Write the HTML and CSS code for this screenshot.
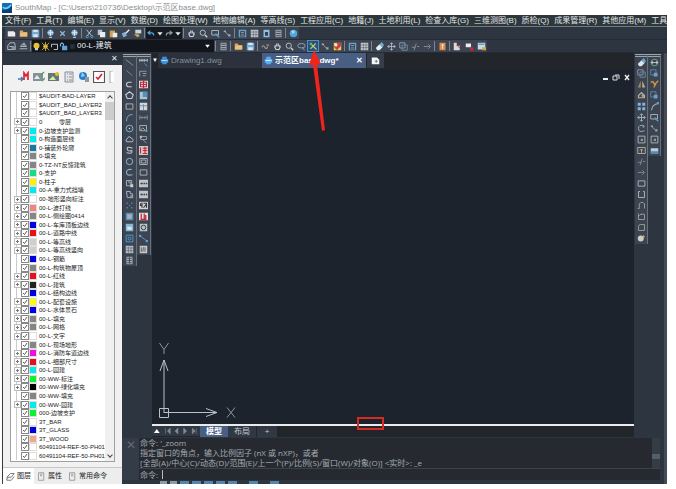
FILE: index.html
```html
<!DOCTYPE html>
<html lang="zh-CN">
<head>
<meta charset="utf-8">
<title>SouthMap</title>
<link rel="stylesheet" href="styles.css">
</head>
<body>
<div class="app">
  <header class="titlebar">
    <svg class="logo" viewBox="0 0 12 12"><rect width="12" height="12" rx="1" fill="#1769b5"/><path d="M0 8C4 9 8 7 12 3V12H0Z" fill="#0b3f7c"/><path d="M1 5C4 8 8 6 11 2" stroke="#63d2f2" stroke-width="2" fill="none"/></svg>
    <span>SouthMap - [C:\Users\210736\Desktop\示范区base.dwg]</span>
  </header>
  <nav class="menubar">
    <button>文件(F)</button><button>工具(T)</button><button>编辑(E)</button><button>显示(V)</button><button>数据(D)</button><button>绘图处理(W)</button><button>地物编辑(A)</button><button>等高线(S)</button><button>工程应用(C)</button><button>地籍(J)</button><button>土地利用(L)</button><button>检查入库(G)</button><button>三维测图(B)</button><button>质检(Q)</button><button>成果管理(R)</button><button>其他应用(M)</button><button>工具箱</button>
  </nav>
  <div class="toolbars">
    <div class="toolbar">
      <div class="group" data-icons="new folder save | globe cross globe | cut copy paste brush match |"></div>
      <div class="group history" data-icons="undo caret redo caret"></div>
      <div class="group" data-icons="| hand zoom zoomwin scatter | panel table props list | help"></div>
    </div>
    <div class="toolbar">
      <div class="group" data-icons="layers stack |"></div>
      <div class="layer-combo">
        <div class="group small" data-icons="bulb sun frame lock swatch"></div>
        <select aria-label="当前图层"><option>00-L-建筑</option></select>
        <svg class="combo-caret" viewBox="0 0 12 12"><path d="M2 4H10L6 9Z" fill="#fff"/></svg>
      </div>
      <div class="group" data-icons="| list | folder save | link hand zoom zoomprev pick! scatter colors | panel table | eraser move copyobj trim extend | book | export record sheet"></div>
    </div>
  </div>

  <div class="workspace">
    <aside class="panel">
      <div class="panel-head"><button aria-label="关闭面板">✕</button></div>
      <div class="panel-body">
        <div class="panel-tools" data-icons="addmark picture image tree globeplus checkred handle"></div>
        <div class="tree-box">
          <ul class="tree" id="tree"></ul>
          <div class="scroll"><span class="up"></span><span class="thumb"></span><span class="down"></span></div>
        </div>
      </div>
      <div class="panel-tabs">
        <button class="current"><svg viewBox="0 0 12 12"><path d="M1 7L6 2H11L7 7ZM1 9L3 8M1 9L1 11H7L11 6" fill="none" stroke="#555"/></svg>图层</button>
        <button><svg viewBox="0 0 12 12"><path d="M2 1H9V11H2ZM4 3H7M4 5H7" fill="none" stroke="#888"/></svg>属性</button>
        <button><svg viewBox="0 0 12 12"><path d="M2 1H9V11H2ZM4 3H7M4 5H7" fill="none" stroke="#888"/></svg>常用命令</button>
      </div>
    </aside>

    <div class="main">
      <div class="stage">
        <div class="rail">
          <div class="column" data-icons="line ray polyc polygon rect arc circle cloud spline ellipse ellarc insert block points hatch gradient region table text"></div>
          <div class="column" data-icons="dim leader redbox bluebox grid tee imgpin node redtext frameimg rect dashes dashes ninety redbars camera line2 table2"></div>
        </div>
        <div class="document">
          <div class="doc-tabs">
            <span class="doc-menu">▼</span>
            <button class="doc-tab"><svg viewBox="0 0 12 12"><path d="M3 1H9V4H3ZM1 4H11V9H1ZM3 8H9V11H3Z" fill="#3c92dc"/><path d="M2 6H10" stroke="#e0f0ff"/></svg>Drawing1.dwg</button>
            <button class="doc-tab active"><svg viewBox="0 0 12 12"><path d="M3 1H9V4H3ZM1 4H11V9H1ZM3 8H9V11H3Z" fill="#58aef5"/><path d="M2 6H10" stroke="#fff"/></svg>示范区base.dwg*<span class="close">✕</span></button>
            <button class="doc-new" aria-label="新建"><svg viewBox="0 0 12 12"><path d="M1 2H8L11 5V11H1Z" fill="#f3f5f7"/><path d="M7 5V9M5 7H9" stroke="#59616b"/></svg></button>
          </div>
          <div class="canvas">
            <div class="win-controls">
              <svg viewBox="0 0 30 10"><path d="M1 7H6" stroke="#eee" stroke-width="2"/><path d="M13 3H17V7M11 4H15V8H11Z" fill="none" stroke="#ddd"/><path d="M23 3L27 8M27 3L23 8" stroke="#eee" stroke-width="1.4"/></svg>
            </div>
            <svg class="ucs" viewBox="0 0 84 84">
              <g fill="none" stroke="#b9c0c6"><path d="M7.500 3L12 9.500L16.500 3M12 9.500V14" stroke="#8d949b"/><path d="M12 73V20M8 31L12 20L16 31M7.500 68.500H16.500V77.500H7.500ZM12 72.500H65M54 68.500L65 72.500L54 76.500"/><path d="M75 67.500L83 77.500M83 67.500L75 77.500" stroke="#8d949b"/></g>
            </svg>
          </div>
          <div class="layout-tabs">
            <svg viewBox="0 0 50 10"><path d="M2 7L5 3L8 7Z" fill="#fff"/><path d="M14 2V8M33 2L36 5L33 8ZM27 2V8L24 5ZM19 2V8L16 5ZM42 2L45 5L42 8ZM46 2V8" fill="#828b96" stroke="#828b96" stroke-width=".6"/></svg>
            <button class="current">模型</button><button>布局</button><button class="plus">+</button>
          </div>
        </div>
        <div class="rail right">
          <div class="column" data-icons="eraser copyobj mirror offset array move rotate scale stretch trim extend rect rectgap join chamfer fillet explode"></div>
          <div class="column" data-icons="measure copyblue pencil copyblue curve zoomwin scatter scale sheet2"></div>
        </div>
      </div>
      <div class="command">
        <div class="command-side">✕</div>
        <div class="command-main">
          <div class="log">
            <div class="log-text"><p>命令: '_zoom</p><p>指定窗口的角点，输入比例因子 (nX 或 nXP)，或者</p><p>[全部(A)/中心(C)/动态(D)/范围(E)/上一个(P)/比例(S)/窗口(W)/对象(O)] &lt;实时&gt;: _e</p></div>
            <div class="log-scroll"><span></span></div>
          </div>
          <div class="prompt"><label for="cmd">命令:</label><input id="cmd" type="text"><i></i></div>
        </div>
      </div>
      <div class="status"><i></i><i></i><b></b><b></b><b></b><b></b><b></b><s></s><b></b><s></s><b></b></div>
    </div>
    <div class="window-edge"></div>
  </div>
  <svg class="arrow" viewBox="0 0 20 84"><path d="M6 1L1 16L5 16L14 82L17 81L9 16L13 15Z" fill="#f1241b"/></svg>
  <div class="mark"></div>
</div>
<script src="app.js"></script>
</body>
</html>
```
FILE: styles.css
```css
* { box-sizing: border-box; }
body {
  margin: 0;
  background: #fff;
  font-family: "Liberation Sans", "Noto Sans CJK SC", sans-serif;
  font-size: 8px;
  line-height: 10px;
}
button, select, input {
  font: inherit;
  color: inherit;
  background: none;
  border: 0;
  padding: 0;
  margin: 0;
  border-radius: 0;
  appearance: none;
}
svg { display: block; }

.app {
  position: relative;
  height: 100vh;
  padding: 0 9px 5px 2px;
  display: flex;
  flex-direction: column;
  overflow: hidden;
}
.titlebar {
  flex: 0 0 15px;
  display: flex;
  align-items: center;
  gap: 3px;
  color: #8e8e8e;
}
.logo { width: 10px; height: 10px; }
.menubar {
  flex: 0 0 12px;
  display: flex;
  align-items: center;
  gap: 5px;
  padding-left: 3px;
  overflow: hidden;
  white-space: nowrap;
  background: #2c363b;
  border-bottom: 1px solid #707b80;
  color: #e2e6e8;
}
.menubar button { flex: none; }

.toolbars { flex: 0 0 26px; background: #2d3541; }
.toolbar {
  display: flex;
  align-items: center;
  height: 13px;
  padding-left: 3px;
  border-bottom: 1px solid #262c35;
}
.group { display: flex; align-items: center; height: 12px; background: #3b4450; }
.group button, .column button { display: grid; place-items: center; width: 12px; height: 12px; }
.group svg { width: 9px; height: 9px; opacity: .9; }
.group .sep { width: 1px; height: 10px; margin: 0 1px; background: #7d868f; }
.group.history { background: #151a21; }
.group.history button { width: 9px; }
.group.history svg { width: 8px; height: 9px; }
.group .on { background: #28527b; outline: 1px solid #4f8ec6; outline-offset: -1px; }
.layer-combo {
  display: flex;
  align-items: center;
  width: 182px;
  height: 12px;
  background: #12161c;
  color: #edf0f2;
}
.group.small { background: none; }
.group.small button { width: 9px; }
.layer-combo select { flex: 1; min-width: 0; height: 10px; line-height: 10px; }
.combo-caret { width: 7px; height: 8px; margin: 0 3px; }

.workspace { flex: 1; min-height: 0; display: flex; background: #2d3541; }
.panel {
  flex: 0 0 120px;
  min-width: 0;
  display: flex;
  flex-direction: column;
  border-left: 1px solid #343b44;
  background: #f1f1f1;
}
.panel-head {
  flex: 0 0 12px;
  display: flex;
  justify-content: flex-end;
  padding-right: 4px;
  background: #2d3541;
  color: #e2e5e8;
}
.panel-body { flex: 1; min-height: 0; display: flex; flex-direction: column; padding: 4px 7px 5px; }
.panel-tools { flex: 0 0 18px; display: flex; gap: 1px; padding: 1px 0 0 8px; }
.panel-tools button { flex: none; width: 14px; height: 14px; }
.panel-tools button:last-child { width: 8px; overflow: hidden; }
.panel-tools svg { width: 12px; height: 12px; }
.tree-box { flex: 1; min-height: 0; display: flex; margin-top: 4px; background: #fff; border: 1px solid #a0a0a0; }
.tree {
  flex: 1;
  min-width: 0;
  min-height: 0;
  display: flex;
  flex-direction: column;
  margin: 0;
  padding: 0 0 1px 2px;
  overflow: hidden;
  list-style: none;
  color: #222;
  font-size: 6px;
  line-height: 8px;
}
.tree li { flex: 1 1 0; min-height: 0; white-space: pre; }
.tree label { display: flex; align-items: center; height: 100%; }
.twig { flex: 0 0 8px; height: 100%; display: grid; place-items: center; background: linear-gradient(#ccc, #ccc) 3px 0 / 1px 100% no-repeat; }
.twig.open::before {
  content: "";
  width: 5px;
  height: 5px;
  border: 1px solid #bbb;
  background: linear-gradient(#777, #777) center / 3px 1px no-repeat, linear-gradient(#777, #777) center / 1px 3px no-repeat, #fff;
}
.tree input { flex: 0 0 8px; height: 8px; border: 1px solid #888; }
.tree input:checked { background: url("data:image/svg+xml,%3Csvg xmlns='http://www.w3.org/2000/svg' viewBox='0 0 6 6'%3E%3Cpath d='M1 3L2.500 4.500L5 1' fill='none' stroke='%23333' stroke-width='.8'/%3E%3C/svg%3E") center / 6px 6px no-repeat, #fff; }
.chip { flex: 0 0 6px; height: 6px; margin: 0 3px 0 1px; box-shadow: 0 0 0 1px #ddd; }
.scroll { flex: 0 0 9px; display: flex; flex-direction: column; align-items: center; background: #f0f0f0; }
.scroll .up, .scroll .down { width: 4px; height: 4px; margin: 4px 0 2px; border: solid #444; border-width: 1px 0 0 1px; rotate: 45deg; }
.scroll .down { margin: auto 0 4px; rotate: 225deg; }
.scroll .thumb { width: 9px; height: 18px; background: #cdcdcd; }
.panel-tabs { flex: 0 0 17px; display: flex; align-items: center; background: #ededed; border-top: 1px solid #c8c8c8; color: #222; font-size: 7px; }
.panel-tabs button { display: flex; align-items: center; gap: 2px; height: 16px; padding: 0 3px; white-space: nowrap; }
.panel-tabs svg { width: 9px; height: 9px; }
.panel-tabs .current { background: #fff; }

.main { flex: 1; min-width: 0; display: flex; flex-direction: column; }
.stage { flex: 1; min-height: 0; display: flex; }
.rail { flex: 0 0 30px; display: flex; align-items: flex-start; padding: 1px 1px 0; }
.column { width: 14px; border-top: 3px double #9aa3ac; border-right: 1px solid #69727c; background: #3b4450; }
.rail.right .column { width: 13px; }
.column button { width: 100%; height: 11px; }
.column svg { width: 9px; height: 9px; opacity: .85; }
.document { flex: 1; min-width: 0; display: flex; flex-direction: column; background: #1c232d; }
.doc-tabs { flex: 0 0 16px; display: flex; background: #22262b; }
.doc-menu { width: 6px; color: #fff; font-size: 6px; line-height: 14px; }
.doc-tab, .doc-new { display: flex; align-items: center; height: 15px; gap: 2px; }
.doc-tab { width: 104px; padding-left: 2px; background: #2b323d; color: #87909b; }
.doc-tab svg { width: 9px; height: 9px; }
.doc-tab.active { background: #485f83; color: #fff; font-weight: bold; }
.close { margin: 0 3px 0 auto; }
.doc-new { padding: 0 4px; margin-left: 1px; background: #353d48; }
.doc-new svg { width: 9px; height: 9px; }
.canvas { flex: 1; min-height: 0; display: flex; flex-direction: column; justify-content: space-between; border-bottom: 2px solid #e9ebed; }
.win-controls { align-self: flex-end; padding: 3px 2px; }
.win-controls svg { width: 30px; height: 10px; }
.ucs { width: 84px; height: 84px; }
.layout-tabs { flex: 0 0 11px; display: flex; background: #22262b; color: #c3c9cf; }
.layout-tabs svg { width: 48px; height: 10px; background: #303843; }
.layout-tabs button { width: 28px; background: #303843; }
.layout-tabs .current { background: #485f83; color: #fff; font-weight: bold; }
.layout-tabs .plus { width: 20px; margin-left: 1px; }

.command { flex: 0 0 43px; display: flex; border-top: 1px solid #2d3541; color: #a4abb3; }
.command-side { flex: 0 0 17px; padding-top: 2px; background: #343c48; color: #626b76; font-size: 12px; text-align: center; }
.command-main { flex: 1; min-width: 0; margin-right: 4px; display: flex; flex-direction: column; background: #262a30; font-family: "Open Sans", "Noto Sans CJK SC", sans-serif; }
.log { display: flex; justify-content: space-between; height: 31px; border-bottom: 1px solid #3c4249; }
.log-text p { height: 10px; margin: 0; padding-left: 1px; white-space: nowrap; line-height: 10px; }
.log-scroll { width: 8px; display: flex; align-items: center; background: #343c45; }
.log-scroll span { width: 8px; height: 5px; margin-top: 6px; background: #565f69; }
.prompt { flex: 1; display: flex; align-items: center; padding-left: 1px; }
.prompt input { order: 2; flex: 1; min-width: 0; height: 9px; }
.prompt i { width: 1px; height: 9px; margin-left: 4px; background: #b5bbc1; }
.status { flex: 0 0 4px; display: flex; gap: 3px; padding: 1px 0 0 38px; background: #2d3541; }
.status i { width: 7px; background: #929aa4; }
.status b { width: 9px; background: #5584ad; }
.status s { width: 6px; }
.window-edge { flex: 0 0 3px; background: #444b55; }

.arrow { position: absolute; left: 308px; top: 49px; width: 20px; height: 84px; }
.mark { position: absolute; left: 357px; bottom: 59px; width: 27px; height: 13px; border: 2px solid #d72b22; }
```
FILE: app.js
```javascript
// Drawing helpers: w = outline in a colour, f = filled shape.
const w = (d, c = "#c5ccd2", s = 1.2) => `<path d="${d}" fill="none" stroke="${c}" stroke-width="${s}"/>`;
const f = (d, c = "#e4e8ec") => `<path d="${d}" fill="${c}"/>`;
const disc = (x, y, r, c) => `<circle cx="${x}" cy="${y}" r="${r}" fill="${c}"/>`;
const ring = (x, y, r, c = "#c5ccd2") => `<circle cx="${x}" cy="${y}" r="${r}" fill="none" stroke="${c}" stroke-width="1.3"/>`;
const B = "#5aaee8", R = "#dd2434";

const icons = {
  new: f("M1 3H9L11 5V10H1Z", "#fff"),
  folder: f("M1 2H5L6 4H11V10H1Z", "#f0b058") + f("M2 5H11V10H1Z", "#ffce83"),
  save: f("M1 1H11V11H1Z", "#79b4e3") + f("M3 1H9V4H3ZM3 7H9V11H3Z", "#eef5fb"),
  globe: disc(6, 5, 4, "#8bbfe9") + w("M2 5H10M6 1V9M4 11H8", "#fff"),
  cross: w("M3 3L9 9M9 3L3 9", "#a9c7e3", 1.5),
  cut: w("M2 1L9 9M9 1L3 9", "#dbe4ec") + ring(3, 10, 1.5, B) + ring(9, 10, 1.5, B),
  copy: f("M1 1H7V8H1Z", "#c9d3dd") + f("M4 4H11V11H4Z", "#fff"),
  paste: f("M1 2H8V11H1Z", "#e7a653") + f("M5 5H11V11H5Z", "#fff"),
  brush: f("M1 6L5 4L8 9L3 11Z", "#7fc1ef") + w("M6 6L11 1", "#fff", 2),
  match: f("M3 1H11V6H3Z", "#dde3e9") + f("M1 7H7L9 9L6 11Z", "#e2b45e"),
  undo: w("M3 5H7Q10 5 10 9", B, 2) + f("M0 5L5 1V9Z", B),
  redo: w("M9 5H5Q2 5 2 9", "#9aa5b0", 2) + f("M12 5L7 1V9Z", "#9aa5b0"),
  caret: f("M2 4H10L6 9Z", "#fff"),
  hand: w("M3 7V4M5 6V2M7 6V2M9 7V4M2 6L4 10H8L10 6", "#e5e8eb", 1.4),
  zoom: ring(5, 5, 3.5) + w("M8 8L11 11", "#dce1e6", 1.8),
  zoomwin: w("M1 2H10V8H1Z") + w("M6 6L11 11", B, 2),
  zoomprev: `<ellipse cx="6" cy="5" rx="5" ry="3" fill="none" stroke="#b9c9d8"/>` + w("M7 7L10 11", B, 1.5),
  panel: f("M1 1H11V11H1Z", "#6dade0") + f("M3 3H9V10H3Z", "#26303b") + w("M4 5H8M4 8H8"),
  table: f("M1 1H11V11H1Z", "#d3d8dd") + w("M1 4H11M1 7.500H11M4.500 2V11M8 2V11", "#59636e", .8),
  props: f("M2 1H10V11H2Z", "#9cc9ee") + f("M4 4H8V9H4Z", "#27455f"),
  list: f("M2 1H10V11H2Z", "#aab2bb") + w("M3 3H9M3 6H9M3 9H9", "#3b4450"),
  help: disc(6, 6, 5, "#51b2ef") + f("M3 3Q6 0 8 4L5 7Z", "#b9e4ff"),
  layers: w("M1 5L4 1H10L11 5V10H1ZM3 6H9", "#ccd3da") + f("M6 6H11V10H6Z", "#8d9ba9"),
  stack: w("M1 9H11M2 6H10L8 3H4Z", "#c3cbd3") + f("M5 1H8V5H5Z", "#98a7b5"),
  bulb: disc(6, 5, 4, "#ffd33a") + f("M4 8H8V11H4Z", "#e3e3d8"),
  sun: disc(6, 6, 3, "#ffe44e") + w("M1 1L11 11M11 1L1 11M6 0V12", "#e9b42f"),
  frame: w("M2 3H10V10H5M2 3V7", "#dfe3e6"),
  lock: f("M4 5H11V11H4Z", "#63b4f2") + w("M2 6V3Q4 0 6 3V5", "#8fc8f2", 1.5),
  swatch: f("M3 3H9V9H3Z", "#30353b"),
  link: w("M1 7Q3 3 5 7T9 6M7 4H11", "#b9aa93", 1.4),
  pick: w("M2 9L9 2M3 3L10 10", "#cfd876", 1.5) + f("M1 1H4V4H1Z", "#78b862"),
  scatter: w("M2 3L8 9", "#b8b6a8") + f("M1 2H4V4H1ZM7 7H10V10H7Z", "#9db6c7"),
  colors: f("M1 1H11V11H1Z", "#f5df55") + f("M1 6L6 1H11V5L5 11Z", "#df3f38") + disc(4, 4, 2, "#fff"),
  eraser: f("M1 8L6 3L10 7L6 11H3Z", "#fff") + f("M6 3L9 0L12 4L10 7Z", "#70b9ef"),
  move: w("M6 1V11M1 6H11M4 3L6 1L8 3M4 9L6 11L8 9M3 4L1 6L3 8M9 4L11 6L9 8", "#b9c7d3"),
  copyobj: w("M1 1H8V8H1Z", "#9aa8b5") + w("M4 4H11V11H4Z", "#7695b0"),
  trim: w("M1 7H6M7 2L4 11M8 6H11", "#969a93"),
  extend: w("M1 6H9M7 3L10 6L7 9", "#969a93"),
  book: f("M2 1H10V11H2Z", "#f2954a") + w("M6 3V9M5 4H8", "#fff"),
  export: f("M1 1H5V11H1ZM5 5H9V11H5Z", "#f0e9ed") + w("M5 4L10 9M9 5H11", R),
  record: f("M1 2H8V7H1Z", "#fff") + disc(9, 9, 2.5, R),
  sheet: f("M1 1H11V10H1Z", "#dbe6ee") + f("M2 2H10V4H2Z", B) + f("M7 7H12V11H7Z", "#e8ae46"),
  addmark: w("M0 8H5M3 6L5 8L3 10", "#3d7fbb", 1.4) + w("M6 9V2L8 5L10 2V9", R, 1.7),
  picture: f("M0 2H10V10H0Z", "#87909a") + f("M1 8L4 4L7 8Z", "#e6f0e6") + w("M8 4L11 1M9 10L12 7", "#4aa657", 1.4),
  image: f("M0 2H11V10H0Z", "#617a75") + f("M1 9L5 5L8 9Z", "#d8e9b5") + disc(9, 3, 2, "#efb832"),
  tree: f("M2 1H10V11H2Z", "#e5e8ea") + w("M2 1H10V11H2ZM4 3H5M6 3H9M4 6H5M6 6H9M4 9H5M6 9H9", "#6c7780", .8),
  globeplus: disc(5, 5, 4, "#267dca") + f("M4 1L7 5L3 6Z", "#9ed2ee") + f("M7 6H11V11H7Z", "#8d9aa5"),
  checkred: f("M1 1H11V11H1Z", "#fff") + w("M.5 .5H11.500V11.500H.5Z", "#555") + w("M3 6L5 8L9 3", R, 1.7),
  handle: f("M2 0H6V12H2Z", "#fff") + w("M5 0H2V12H5", "#999", .8),
  line: w("M1 2L11 10", "#9aabb8"), ray: w("M2 2L10 9", "#8799a8"), line2: w("M1 2L10 9", B) + f("M0 1H3V4H0ZM9 8H12V11H9Z", B),
  polyc: w("M9 3H5Q2 3 2 6T5 9H9", "#dbe4eb", 1.5), polygon: w("M6 1L11 5L9 10H3L1 5Z", "#dbe4eb", 1.5),
  rect: w("M1.500 2.500H10.500V9.500H1.500Z"), arc: w("M2 11Q2 2 10 2", "#9cc2df"),
  circle: ring(6, 6, 4.5, "#8fc4ec") + disc(6, 6, 1, "#fff"),
  cloud: w("M2 9Q0 6 3 5Q5 0 8 4Q12 5 10 9Z", "#d8dfe5"), spline: w("M10 3Q2 0 3 4T9 6Q11 11 2 9", "#d8dfe5", 1.4),
  ellipse: ring(6, 6, 4.3, "#9fc7e6"), ellarc: w("M9 2Q2 1 2 6T10 9", "#9fc7e6", 1.5),
  insert: w("M2 2H9V9H2ZM4 4H7V7") + f("M7 7H11V11H7Z"), block: w("M2 2H7V5H10V10H3Z") + f("M7 7H11V11H7Z", "#9aa9b7"),
  points: f("M2 2H4V4H2ZM8 2H10V4H8ZM5 5H7V7H5ZM2 8H4V10H2ZM8 8H10V10H8Z", "#5687ad"),
  hatch: f("M1 1H11V11H1Z", "#629dcc") + f("M3 3H9V9H3Z", "#bdc4ca"), gradient: f("M1 1H11V11H1Z", "#8fcdf2") + f("M3 5H9V9H3Z", "#fff"),
  region: w("M1.500 1.500H10.500V10.500H1.500Z", B) + ring(6, 6, 2, B), text: f("M2 1H10V11H2Z", "#bcc3c9") + w("M3 3H9M3 6H9M3 9H9M6 2V10", "#444b55"),
  dim: w("M1 1V5M1 3H11M11 1V5M4 1V5M7 1V5", "#dce2e8") + w("M7 7L11 11", B), leader: w("M1 10V3H10M5 6H10M5 9H9", "#a8b3bd"),
  redbox: f("M0 1H12V11H0Z", "#fff") + w("M2 3H10V9H2ZM6 1V11M3 6H10", R, 1.6),
  bluebox: f("M1 1H11V11H1Z", "#bddcf0") + f("M5 1H11V8H5Z", "#5d9cce"), grid: f("M1 1H11V11H1Z", "#edf2f5") + w("M1 5H11M6 3V11", "#6697bc"),
  tee: w("M1 6H11M1 3V9M4 4V8M8 4V8M11 3V9", "#8b98a3"), imgpin: w("M1 2H10V9H1ZM2 8L5 5L8 8") + disc(10, 9, 1.5, B),
  node: w("M2 2H10V6H2ZM5 6L10 11", "#a5b5c2") + f("M1 1H4V4H1Z", "#ccc"), redtext: f("M0 0H12V12H0Z", "#f2dede") + w("M2 2V10M5 3H11M5 6H11M5 10H11M8 1V10", R, 1.5),
  frameimg: w("M1 2H11V10H1ZM3 4H9V8H3Z"), dashes: f("M0 1H12V11H0Z", "#d8dadc") + w("M2 6H5M6 6H8M9 6H11", "#383d43", 2),
  ninety: f("M0 1H12V11H0Z", "#eee") + w("M2 3V6H4M4 2V9M6 3L10 3V9M6 9L10 4", "#333", 1.5), redbars: f("M0 1H12V11H0Z", "#fff") + w("M3 2V9M7 2V9M9 4V9M2 10H10", R, 1.7),
  camera: f("M1 1H11V11H1Z", "#d4d8dc") + ring(6, 6, 3, "#39424d"), table2: f("M1 1H11V11H1Z", "#e0e0de") + w("M3 3V9M6 3L5 9M8 3V9", "#555"),
  mirror: f("M5 1V10H1Z", "#ae956b") + f("M7 1V10H11Z", "#dec28c"), offset: w("M2 9H10V6L6 2L2 6Z", "#dbc59b", 1.5) + disc(8, 6, 2, "#bbb"),
  array: f("M1 1H5V5H1ZM7 1H11V5H7ZM1 7H5V11H1ZM7 7H11V11H7Z", "#94c8f1"), rotate: w("M9 3Q2 0 2 6T10 9M7 1L10 3L8 5", "#b3c5d4"),
  scale: w("M1.500 1.500H10.500V10.500H1.500Z") + f("M5 5H8V8H5Z", "#a6aaa3"), stretch: w("M1 2H11V10H1ZM6 4V9M4 6L6 4L8 6", "#d1c4a6"),
  rectgap: w("M4 2H2V10H10V2H8"), join: w("M1 10H3V4L5 2H8L10 4V10", "#b3b5a7"), chamfer: w("M2 10V2M2 10H10V3H5M3 5L6 2", "#b0b1a7"), fillet: w("M2 10V5Q2 2 5 2H10V10Z", "#b0b1a7"),
  explode: disc(5, 6, 4, "#e7e5d5") + f("M8 1L11 4L8 5Z", "#e9b760"), measure: ring(6, 6, 4.5, "#73b286") + w("M1 6H11M3 4V8M9 4V8", "#d9e4dc"),
  copyblue: w("M1 1H8V8H1Z", "#6295c1") + f("M5 5H10V10H5Z", "#74b2e2"), pencil: w("M1 3L4 2L6 6L11 1M5 10L8 5", "#e7a642", 1.8),
  curve: w("M2 11Q3 3 11 2", "#a2c6e1", 1.5) + f("M9 0H12V3H9Z", B), sheet2: f("M1 3H11V10H1Z", "#dbe6ee") + f("M1 7H11V10H1Z", "#4a97d1"),
};

document.querySelectorAll("[data-icons]").forEach((bar) => {
  bar.innerHTML = bar.dataset.icons.split(" ").map((key) => {
    if (key === "|") return '<span class="sep"></span>';
    const name = key.replace("!", "");
    return `<button class="${name === key ? "tool" : "tool on"}" aria-label="${name}"><svg viewBox="0 0 12 12">${icons[name]}</svg></button>`;
  }).join("");
});

// Each layer: name, colour, and 1 when it has children.
const cyan = "#00ecec", gray = "#858585", blue = "#0000df", red = "#e70f1d", white = "#fff", green = "#0cf22c", pale = "#cfcfcf";
const layers = [
  ["$AUDIT-BAD-LAYER", white], ["$AUDIT_BAD_LAYER2", white], ["$AUDIT_BAD_LAYER3", white],
  ["0          零层", white, 1], ["0-边坡支护监测", cyan, 1], ["0-构造面层线", cyan], ["0-铺装外轮廓", "#167ba0"],
  ["0-填充", gray], ["0-TZ-NT反馈建筑", gray], ["0-支护", "#16dc83"], ["0-柱子", "#fff000"],
  ["00-A-重力式挡墙", cyan], ["00-地形竖向标注", white, 1], ["00-L-波打线", "#ee8585", 1], ["00-L-侧绘图0414", gray, 1],
  ["00-L-车库顶板边线", blue, 1], ["00-L-道路中线", red, 1], ["00-L-等高线", pale, 1], ["00-L-等高线竖向", pale, 1],
  ["00-L-钢筋", blue], ["00-L-构筑物屋顶", gray], ["00-L-红线", red, 1], ["00-L-建筑", "#222", 1],
  ["00-L-结构边线", blue], ["00-L-配套设施", "#ffff00", 1], ["00-L-水体景石", blue, 1], ["00-L-填充", gray, 1],
  ["00-L-网格", gray, 1], ["00-L-文字", white, 1], ["00-L-现场地形", gray], ["00-L-消防车道边线", "#ed10e2", 1],
  ["00-L-细部尺寸", red, 1], ["00-L-园建", cyan, 1], ["00-WW-标注", green, 1], ["00-WW-绿化填充", "#000", 1],
  ["00-WW-填充", gray], ["00-WW-园建", cyan, 1], ["000-边坡支护", green], ["3T_BAR", white],
  ["3T_GLASS", blue], ["3T_WOOD", "#eda98a"], ["60491104-REF-50-PH01", white], ["60491104-REF-50-PH01", white],
];
document.getElementById("tree").innerHTML = layers.map(([name, color, open]) =>
  `<li><label><span class="twig${open ? " open" : ""}"></span><input type="checkbox" checked><span class="chip" style="background:${color}"></span>${name}</label></li>`
).join("");
```
